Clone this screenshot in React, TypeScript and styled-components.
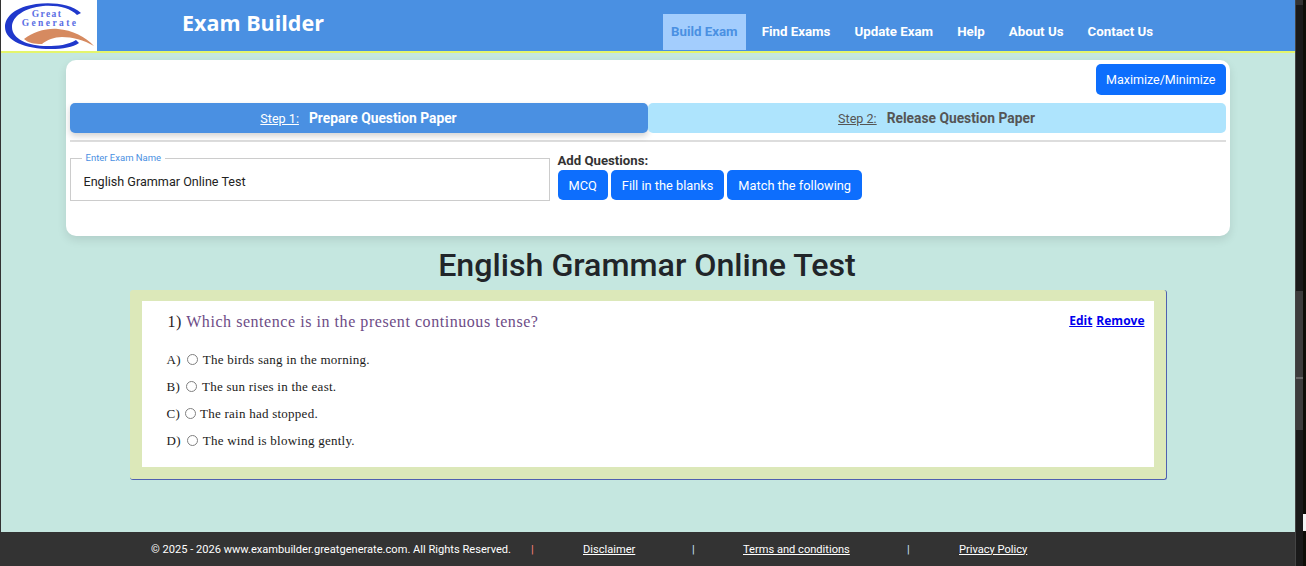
import React from "react";
import styled, { createGlobalStyle } from "styled-components";

const GlobalStyle = createGlobalStyle`
  html, body {
    margin: 0;
    padding: 0;
    height: 100%;
    overflow: hidden;
    background: #c5e7e0;
  }
  #root { height: 100%; }
  * { box-sizing: border-box; }
`;

const navItems = ["Build Exam", "Find Exams", "Update Exam", "Help", "About Us", "Contact Us"];

const options = [
  { label: "A)", text: "The birds sang in the morning.", gap: 6 },
  { label: "B)", text: "The sun rises in the east.", gap: 6 },
  { label: "C)", text: "The rain had stopped.", gap: 5 },
  { label: "D)", text: "The wind is blowing gently.", gap: 6 },
];

const Logo = () => (
  <svg width="96" height="51" viewBox="0 0 96 51">
    <rect width="96" height="51" fill="#fff" />
    <path d="M80 13 C70 4 52 2 35 4 C15 7 4 16 4 27 C4 41 24 49 50 49 C62 49 72 47 78 43 L75 40 C67 45 57 46 46 46 C27 46 11 39 11 27 C11 16 24 8 42 6 C57 5 69 8 76 15 Z" fill="#2038cc" />
    <path d="M23 39 C32 32 45 28 57 29 C71 30 85 37 93 46 C83 40 71 37 61 37 C53 37 46 40 41 44 C33 44 27 43 23 39 Z" fill="#d68a60" />
    <LogoText x="46" y="17" fontSize="9.5" letterSpacing="1.4">Great</LogoText>
    <LogoText x="49" y="25.5" fontSize="9.5" letterSpacing="2.4">Generate</LogoText>
  </svg>
);

const App = () => {
  return (
    <Shell>
      <GlobalStyle />
      <Page>
        <Header>
          <LogoBox><Logo /></LogoBox>
          <Title>Exam Builder</Title>
          <Nav>
            {navItems.map((item, i) => (
              <NavItem key={item} $active={i === 0}>{item}</NavItem>
            ))}
          </Nav>
        </Header>
        <Main>
          <Card>
            <CardTop>
              <PrimaryButton $wide>Maximize/Minimize</PrimaryButton>
            </CardTop>
            <Steps>
              <Step $active>
                <StepNo>Step 1:</StepNo>
                <StepName>Prepare Question Paper</StepName>
              </Step>
              <Step>
                <StepNo>Step 2:</StepNo>
                <StepName>Release Question Paper</StepName>
              </Step>
            </Steps>
            <Divider />
            <FormRow>
              <NameField>
                <legend>Enter Exam Name</legend>
                <NameInput defaultValue="English Grammar Online Test" />
              </NameField>
              <AddBox>
                <AddLabel>Add Questions:</AddLabel>
                <AddButtons>
                  <PrimaryButton>MCQ</PrimaryButton>
                  <PrimaryButton>Fill in the blanks</PrimaryButton>
                  <PrimaryButton>Match the following</PrimaryButton>
                </AddButtons>
              </AddBox>
            </FormRow>
          </Card>
          <ExamTitle>English Grammar Online Test</ExamTitle>
          <QuestionFrame>
            <QuestionBody>
              <QuestionHead>
                <QuestionText><b>1)</b> Which sentence is in the present continuous tense?</QuestionText>
                <Actions>
                  <a href="#edit">Edit</a>
                  <a href="#remove">Remove</a>
                </Actions>
              </QuestionHead>
              <OptionList>
                {options.map(o => (
                  <Option key={o.label} $gap={o.gap}>
                    <span>{o.label}</span>
                    <Radio type="radio" name="q1" />
                    <span>{o.text}</span>
                  </Option>
                ))}
              </OptionList>
            </QuestionBody>
          </QuestionFrame>
        </Main>
        <Footer>
          <Copy>© 2025 - 2026 www.exambuilder.greatgenerate.com. All Rights Reserved.</Copy>
          <Sep $color="#ff8080" $width={52}>|</Sep>
          <FootLink $width={109}>Disclaimer</FootLink>
          <Sep $width={51}>|</Sep>
          <FootLink $width={164}>Terms and conditions</FootLink>
          <Sep $width={52}>|</Sep>
          <FootLink>Privacy Policy</FootLink>
        </Footer>
      </Page>
      <ScrollBar>
        <ScrollCap />
        <ScrollThumb />
        <ScrollNotch />
        <ScrollMark />
      </ScrollBar>
    </Shell>
  );
};

const Shell = styled.div`
  display: flex;
  width: 1306px;
  height: 566px;
  overflow: hidden;
  border-left: 1px solid #333;
`;
const Page = styled.div`
  width: 1294px;
  height: 566px;
  display: flex;
  flex-direction: column;
  background: #c5e7e0;
  font-family: Roboto, "Open Sans", sans-serif;
`;
const Header = styled.header`
  height: 53px;
  flex: none;
  display: flex;
  align-items: flex-start;
  background: #4a90e2;
  border-bottom: 2px solid #e4f56c;
`;
const LogoBox = styled.div`
  width: 96px;
  height: 51px;
  background: #fff;
  svg { display: block; }
`;
const Title = styled.div`
  margin: 8px 0 0 85px;
  width: 481px;
  color: #fff;
  font-family: "Open Sans", sans-serif;
  font-size: 21.5px;
  line-height: 30px;
  font-weight: 700;
`;
const Nav = styled.nav`
  display: flex;
  margin-top: 14px;
`;
const NavItem = styled.div<{ $active?: boolean }>`
  height: 36px;
  padding: 0 8px;
  margin-right: 8px;
  line-height: 36px;
  font-size: 13.3px;
  font-weight: 700;
  white-space: nowrap;
  color: ${p => (p.$active ? "#4a90e2" : "#fff")};
  background: ${p => (p.$active ? "#a3cdfd" : "transparent")};
`;
const Main = styled.main`
  flex: 1;
  min-height: 0;
  display: flex;
  flex-direction: column;
  align-items: center;
  padding-top: 7px;
`;
const Card = styled.section`
  width: 1164px;
  height: 176px;
  margin-left: -1px;
  flex: none;
  padding: 4px;
  background: #fff;
  border-radius: 10px;
  box-shadow: 0 4px 10px rgba(0, 0, 0, 0.1);
`;
const CardTop = styled.div`
  display: flex;
  justify-content: flex-end;
  height: 31px;
`;
const PrimaryButton = styled.button<{ $wide?: boolean }>`
  height: ${p => (p.$wide ? "31px" : "30px")};
  padding: 0 ${p => (p.$wide ? "10px" : "11px")};
  border: none;
  border-radius: 5px;
  background: #0d6efd;
  color: #fff;
  font-family: Roboto, "Open Sans", sans-serif;
  font-size: ${p => (p.$wide ? "12.5px" : "12.8px")};
  white-space: nowrap;
`;
const Steps = styled.div`
  display: flex;
  margin-top: 8px;
  height: 30px;
`;
const Step = styled.div<{ $active?: boolean }>`
  flex: 1;
  display: flex;
  align-items: center;
  justify-content: center;
  gap: 10px;
  border-radius: 5px;
  color: ${p => (p.$active ? "#fff" : "#555")};
  background: ${p => (p.$active ? "#4a90e2" : "#aee4fd")};
  box-shadow: ${p => (p.$active ? "0 3px 6px rgba(0, 0, 0, 0.18)" : "none")};
`;
const StepNo = styled.span`
  font-size: 12.6px;
  text-decoration: underline;
`;
const StepName = styled.span`
  font-size: 13.8px;
  font-weight: 700;
`;
const Divider = styled.div`
  height: 2px;
  margin-top: 7px;
  background: #ddd;
`;
const FormRow = styled.div`
  display: flex;
  gap: 8px;
  margin-top: 11px;
`;
const NameField = styled.fieldset`
  width: 480px;
  height: 48px;
  margin: 0;
  padding: 0 13px;
  border: 1px solid #ccc;
  legend {
    margin-left: -2px;
    padding: 0 4px;
    font-size: 9.5px;
    line-height: 10px;
    color: #4a90e2;
  }
`;
const NameInput = styled.input`
  width: 100%;
  height: 36px;
  padding: 0;
  border: none;
  outline: none;
  font-family: Roboto, "Open Sans", sans-serif;
  font-size: 12.6px;
  color: #222;
  background: transparent;
`;
const AddBox = styled.div`
  display: flex;
  flex-direction: column;
`;
const AddLabel = styled.div`
  font-size: 13.2px;
  line-height: 15px;
  font-weight: 700;
  color: #333;
`;
const AddButtons = styled.div`
  display: flex;
  gap: 3px;
  margin-top: 2px;
`;
const ExamTitle = styled.h1`
  margin: 10px 0 0 -2px;
  height: 44px;
  font-size: 32.2px;
  line-height: 39px;
  font-weight: 500;
  color: #212529;
`;
const QuestionFrame = styled.section`
  width: 1037px;
  height: 190px;
  flex: none;
  padding: 11px 12px 12px 12px;
  background: #dce8b9;
  border-right: 1px solid #5060b0;
  border-bottom: 1px solid #5060b0;
  border-radius: 3px;
`;
const QuestionBody = styled.div`
  height: 166px;
  padding: 12px 9px 0 26px;
  background: #fff;
  font-family: "Liberation Serif", serif;
`;
const QuestionHead = styled.div`
  display: flex;
  justify-content: space-between;
  align-items: flex-start;
`;
const QuestionText = styled.div`
  font-size: 16px;
  line-height: 18px;
  letter-spacing: 0.55px;
  color: #6d4c86;
  b {
    font-weight: 400;
    color: #2b1a1a;
  }
`;
const Actions = styled.div`
  display: flex;
  gap: 4px;
  font-family: "Open Sans", sans-serif;
  font-size: 12px;
  line-height: 16px;
  font-weight: 700;
  a { color: #0000ee; }
`;
const OptionList = styled.div`
  display: flex;
  flex-direction: column;
  gap: 11px;
  margin: 21px 0 0 -1px;
`;
const Option = styled.label<{ $gap: number }>`
  display: flex;
  align-items: center;
  gap: ${p => p.$gap}px;
  height: 16px;
  font-size: 13px;
  letter-spacing: 0.25px;
  color: #1a1a1a;
`;
const Radio = styled.input`
  appearance: none;
  width: 11px;
  height: 11px;
  margin: -1px -1px 0 0;
  border: 1px solid #808080;
  border-radius: 50%;
  background: #fff;
`;
const Footer = styled.footer`
  height: 34px;
  flex: none;
  display: flex;
  align-items: center;
  padding-left: 150px;
  background: #333;
  color: #fff;
  font-size: 11.1px;
`;
const Copy = styled.span`
  width: 380px;
  white-space: nowrap;
`;
const Sep = styled.span<{ $color?: string; $width: number }>`
  width: ${p => p.$width}px;
  flex: none;
  color: ${p => p.$color || "#cfe8ff"};
`;
const FootLink = styled.a<{ $width?: number }>`
  width: ${p => (p.$width ? `${p.$width}px` : "auto")};
  flex: none;
  color: #fff;
  text-decoration: underline;
  white-space: nowrap;
`;
const LogoText = styled.text`
  font-family: "Liberation Serif", serif;
  font-weight: 700;
  fill: #5a6ee4;
  text-anchor: middle;
`;
const ScrollBar = styled.div`
  position: relative;
  flex: 1;
  background: #1a1a1a;
  border-left: 1px solid #444;
  border-right: 3px solid #0e0e08;
`;
const ScrollCap = styled.div`
  position: absolute;
  top: 0;
  left: 0;
  right: 0;
  height: 5px;
  background: #333;
`;
const ScrollThumb = styled.div`
  position: absolute;
  top: 291px;
  left: 0;
  right: 0;
  height: 139px;
  background: #3c3c3c;
`;
const ScrollMark = styled.div`
  position: absolute;
  top: 377px;
  left: 0;
  right: 0;
  height: 2px;
  background: #666;
`;
const ScrollNotch = styled.div`
  position: absolute;
  top: 514px;
  right: -3px;
  width: 3px;
  height: 17px;
  background: #f4f4f4;
`;

export default App;
